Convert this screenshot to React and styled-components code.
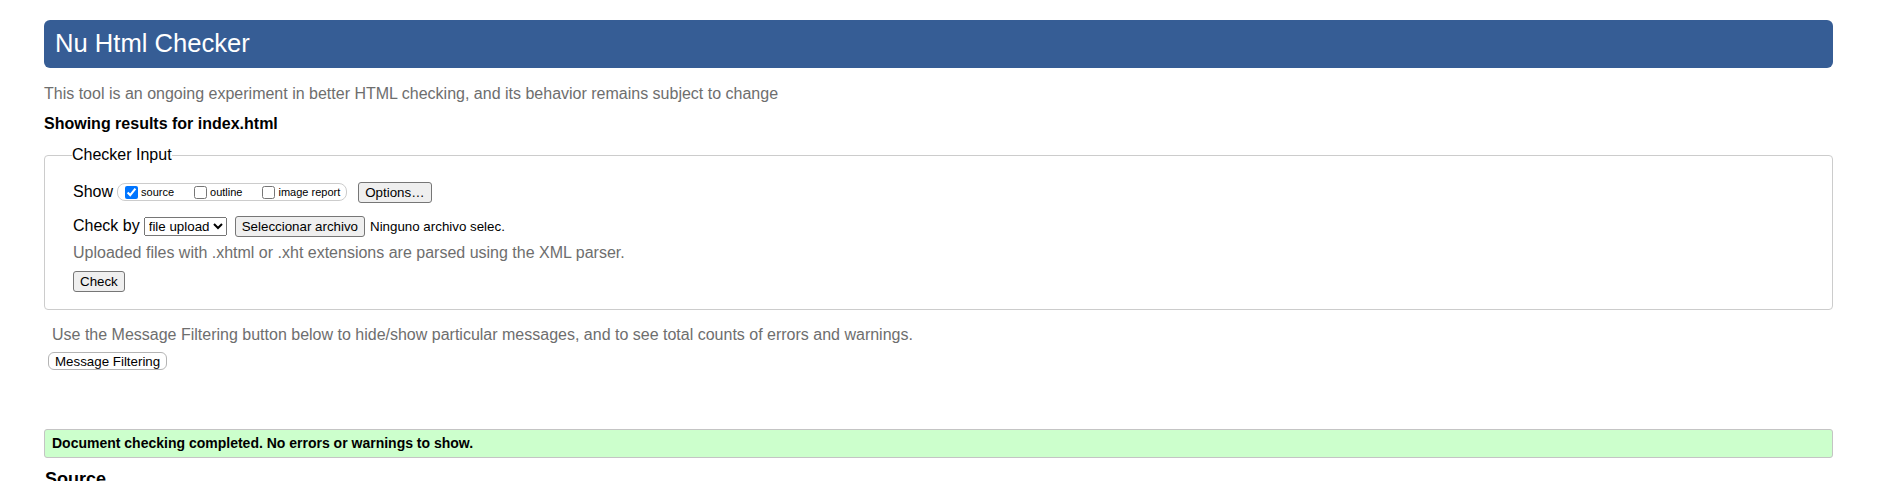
import React from "react";
import styled, { createGlobalStyle } from "styled-components";

const GlobalStyle = createGlobalStyle`
    body {
        margin: 0;
        background: #fff;
        color: #000;
        font-family: "Liberation Sans", Arial, sans-serif;
        font-size: 16px;
    }
`;

const controlFont = `13.333px "Liberation Sans", Arial, sans-serif`;

const Page = styled.div`
    padding: 20px 49px 0 44px;
`;

const Title = styled.h1`
    margin: 0;
    height: 48px;
    box-sizing: border-box;
    padding: 0 11px;
    background: #365d95;
    color: #fff;
    font-size: 25.6px;
    font-weight: normal;
    line-height: 47px;
    border-radius: 6px;
`;

const Note = styled.p`
    margin: ${(p) => p.$top || 0}px 0 0 ${(p) => p.$indent || 0}px;
    color: #6e6e6e;
    line-height: 18px;
`;

const ResultsFor = styled.p`
    margin: 12px 0 0;
    font-weight: bold;
    line-height: 18px;
`;

const Fieldset = styled.fieldset`
    margin: 13px 0 0;
    padding: 0 28px 17px;
    border: 1px solid #ccc;
    border-radius: 4px;
    min-width: 0;
`;

const Legend = styled.legend`
    padding: 0;
    margin-left: -1px;
    line-height: 18px;
`;

const Row = styled.div`
    display: flex;
    align-items: center;
    height: ${(p) => p.$height || 24}px;
    margin-top: ${(p) => p.$top || 0}px;
`;

const RowLabel = styled.span`
    margin-right: 4px;
`;

const CheckGroup = styled.span`
    display: inline-flex;
    align-items: center;
    height: 16px;
    padding: 0 6px 0 3px;
    border: 1px solid #ccc;
    border-radius: 8px;
`;

const CheckLabel = styled.label`
    display: inline-flex;
    align-items: center;
    font-size: 11px;
    margin-right: ${(p) => (p.$last ? 0 : 16)}px;

    input {
        width: 13px;
        height: 13px;
        margin: 0 3px 0 4px;
    }
`;

const Button = styled.button`
    font: ${controlFont};
    height: 21px;
    padding: 1px 6px;
    margin-left: ${(p) => p.$left || 0}px;
    border: 1px solid #767676;
    border-radius: 3px;
    background: #efefef;
    color: #000;
`;

const Select = styled.select`
    font: ${controlFont};
    height: 19px;
    color: #000;
`;

const FileName = styled.span`
    font: ${controlFont};
    margin-left: 5px;
`;

const FilterButton = styled.button`
    display: block;
    font: ${controlFont};
    height: 18px;
    margin: 8px 0 0 4px;
    padding: 0 6px;
    background: #fff;
    color: #000;
    border: 1px solid #b4b4b4;
    border-radius: 6px;
`;

const Success = styled.div`
    margin-top: 59px;
    height: 29px;
    box-sizing: border-box;
    padding: 0 7px;
    background: #ccffcc;
    border: 1px solid #c4c4c4;
    border-radius: 3px;
    font-size: 14px;
    font-weight: bold;
    line-height: 27px;
`;

const SectionTitle = styled.h2`
    margin: 11px 0 0 1px;
    font-size: 18px;
    line-height: 21px;
`;

export default function App() {
    return (
        <>
            <GlobalStyle />
            <Page>
                <Title>Nu Html Checker</Title>
                <Note $top={17}>
                    This tool is an ongoing experiment in better HTML checking, and
                    its behavior remains subject to change
                </Note>
                <ResultsFor>Showing results for index.html</ResultsFor>

                <Fieldset>
                    <Legend>Checker Input</Legend>
                    <Row $top={16}>
                        <RowLabel>Show</RowLabel>
                        <CheckGroup>
                            <CheckLabel>
                                <input type="checkbox" defaultChecked />
                                source
                            </CheckLabel>
                            <CheckLabel>
                                <input type="checkbox" />
                                outline
                            </CheckLabel>
                            <CheckLabel $last>
                                <input type="checkbox" />
                                image report
                            </CheckLabel>
                        </CheckGroup>
                        <Button $left={11}>Options…</Button>
                    </Row>
                    <Row $top={10}>
                        <RowLabel>Check by</RowLabel>
                        <Select defaultValue="file">
                            <option value="address">address</option>
                            <option value="file">file upload</option>
                            <option value="text">text input</option>
                        </Select>
                        <Button $left={8}>Seleccionar archivo</Button>
                        <FileName>Ninguno archivo selec.</FileName>
                    </Row>
                    <Note $top={6}>
                        Uploaded files with .xhtml or .xht extensions are parsed using
                        the XML parser.
                    </Note>
                    <Row $top={8} $height={22}>
                        <Button>Check</Button>
                    </Row>
                </Fieldset>

                <Note $top={16} $indent={8}>
                    Use the Message Filtering button below to hide/show particular
                    messages, and to see total counts of errors and warnings.
                </Note>
                <FilterButton>Message Filtering</FilterButton>

                <Success>
                    Document checking completed. No errors or warnings to show.
                </Success>
                <SectionTitle>Source</SectionTitle>
            </Page>
        </>
    );
}
